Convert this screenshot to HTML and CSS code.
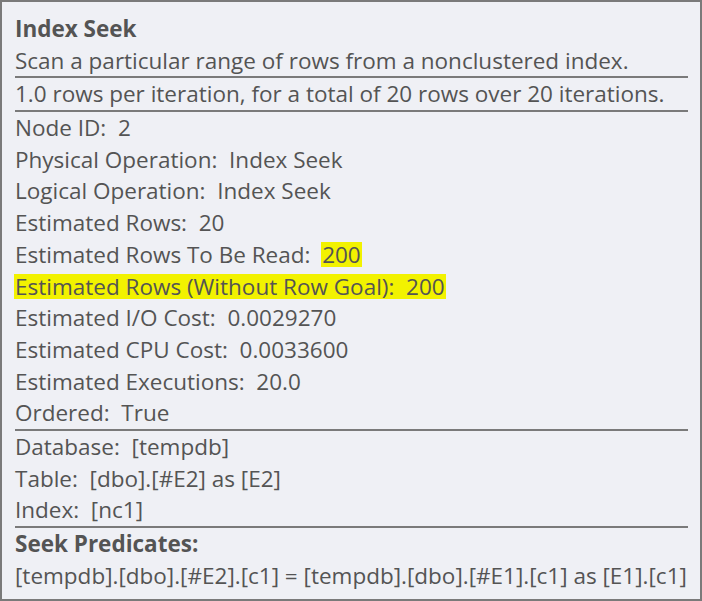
FILE: index.html
```html
<!DOCTYPE html>
<html>
<head>
<meta charset="utf-8">
<link rel="stylesheet" href="styles.css">
</head>
<body>
<div class="tip">
  <div class="row title">Index Seek</div>
  <div class="row sep">Scan a particular range of rows from a nonclustered index.</div>
  <div class="row sep">1.0 rows per iteration, for a total of 20 rows over 20 iterations.</div>
  <div class="row">Node ID:  2</div>
  <div class="row">Physical Operation:  Index Seek</div>
  <div class="row">Logical Operation:  Index Seek</div>
  <div class="row">Estimated Rows:  20</div>
  <div class="row">Estimated Rows To Be Read:  <span class="hl">200</span></div>
  <div class="row"><span class="hl">Estimated Rows (Without Row Goal):  200</span></div>
  <div class="row">Estimated I/O Cost:  0.0029270</div>
  <div class="row">Estimated CPU Cost:  0.0033600</div>
  <div class="row">Estimated Executions:  20.0</div>
  <div class="row sep">Ordered:  True</div>
  <div class="row">Database:  [tempdb]</div>
  <div class="row">Table:  [dbo].[#E2] as [E2]</div>
  <div class="row sep">Index:  [nc1]</div>
  <div class="row title">Seek Predicates:</div>
  <div class="row">[tempdb].[dbo].[#E2].[c1] = [tempdb].[dbo].[#E1].[c1] as [E1].[c1]</div>
</div>
</body>
</html>
```
FILE: styles.css
```css
html, body {
  margin: 0;
  padding: 0;
}
body {
  width: 702px;
  height: 601px;
  overflow: hidden;
}
.tip {
  box-sizing: border-box;
  width: 702px;
  height: 601px;
  border: 2px solid #7a7a7a;
  background: #eff0f5;
  padding: 11px 12px 0 13px;
  font-family: "Open Sans", "Noto Sans", sans-serif;
  font-size: 22.5px;
  color: #545454;
  display: flex;
  flex-direction: column;
}
.row {
  line-height: 31.7px;
  height: 31.7px;
  white-space: pre;
  flex: none;
}
.row.sep {
  border-bottom: 2px solid #7a7a7a;
}
.title {
  font-weight: 700;
}
.hl {
  display: inline-block;
  background: #f2f200;
  line-height: 25px;
  height: 25px;
  padding: 0 1px;
  margin: 0 -1px;
}
```
